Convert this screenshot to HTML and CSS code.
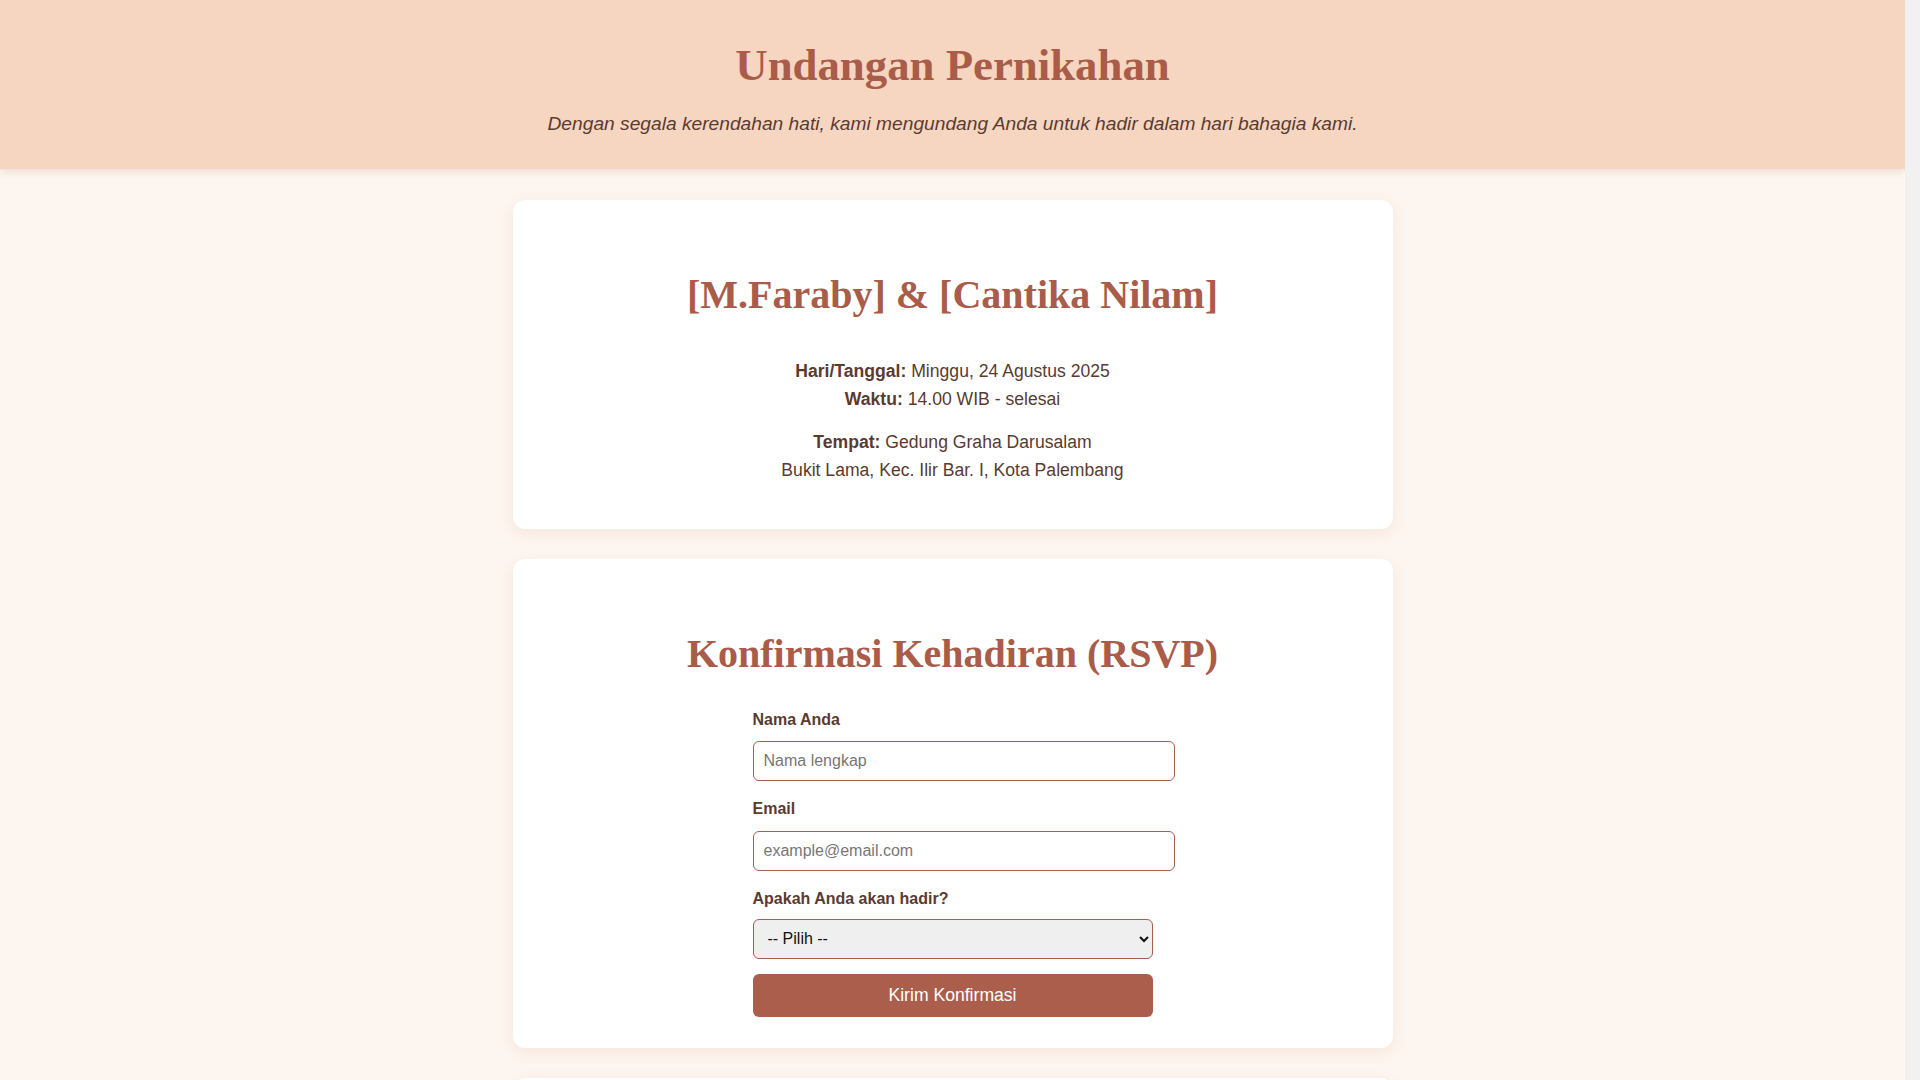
FILE: index.html
```html
<!DOCTYPE html>
<html lang="id">
<head>
<meta charset="utf-8">
<title>Undangan Pernikahan</title>
<link rel="stylesheet" href="styles.css">
</head>
<body>
<header class="hero">
  <h1 class="hero-title">Undangan Pernikahan</h1>
  <p class="hero-sub">Dengan segala kerendahan hati, kami mengundang Anda untuk hadir dalam hari bahagia kami.</p>
</header>
<main class="main">
  <section class="card">
    <h2 class="card-title">[M.Faraby] &amp; [Cantika Nilam]</h2>
    <p class="info info-first"><strong>Hari/Tanggal:</strong> Minggu, 24 Agustus 2025<br><strong>Waktu:</strong> 14.00 WIB - selesai</p>
    <p class="info"><strong>Tempat:</strong> Gedung Graha Darusalam<br>Bukit Lama, Kec. Ilir Bar. I, Kota Palembang</p>
  </section>
  <section class="card card-form">
    <h2 class="card-title">Konfirmasi Kehadiran (RSVP)</h2>
    <form class="form">
      <label class="label" for="nama">Nama Anda</label>
      <input class="field" id="nama" type="text" placeholder="Nama lengkap">
      <label class="label" for="email">Email</label>
      <input class="field" id="email" type="email" placeholder="example@email.com">
      <label class="label label-select" for="hadir">Apakah Anda akan hadir?</label>
      <select class="select" id="hadir">
        <option>-- Pilih --</option>
        <option>Ya, saya akan hadir</option>
        <option>Maaf, tidak bisa hadir</option>
      </select>
      <button class="btn" type="button">Kirim Konfirmasi</button>
    </form>
  </section>
  <section class="card">
    <h2 class="card-title">Ucapan &amp; Doa</h2>
    <p class="info">Terima kasih atas doa dan restu Anda.</p>
  </section>
</main>
</body>
</html>
```
FILE: styles.css
```css
html {
  margin: 0;
  padding: 0;
  background: #f1f1f1;
}
body {
  margin: 0 15px 0 0;
  padding: 0;
  min-height: 100vh;
  background: #fdf5ef;
  font-family: "Liberation Sans", Arial, sans-serif;
  color: #5a3b30;
}
.hero {
  background: #f6d5c1;
  text-align: center;
  padding: 38px 20px 34px;
  box-shadow: 0 2px 8px rgba(120, 70, 50, 0.15);
}
.hero-title {
  margin: 0;
  font-family: "Liberation Serif", "Times New Roman", serif;
  font-weight: bold;
  font-size: 44.8px;
  line-height: 55px;
  color: #a95c49;
}
.hero-sub {
  margin: 20px 0 0;
  font-style: italic;
  font-size: 19.2px;
  line-height: 22px;
  color: #5a3b30;
}
.main {
  padding: 31px 20px 30px;
}
.card {
  max-width: 820px;
  margin: 0 auto 30px;
  padding: 30px;
  background: #ffffff;
  border-radius: 12px;
  box-shadow: 0 4px 14px rgba(200, 130, 100, 0.12);
  text-align: center;
}
.card-form {
  padding-bottom: 31.5px;
}
.card-title {
  margin: 42px 0 32px;
  font-family: "Liberation Serif", "Times New Roman", serif;
  font-weight: bold;
  font-size: 40px;
  line-height: 46px;
  color: #a95c49;
}
.info {
  margin: 15px 0;
  font-size: 17.6px;
  line-height: 28px;
  color: #5a3b30;
}
.info-first {
  margin-top: 39px;
}
.info strong {
  font-weight: bold;
}
.form {
  max-width: 400px;
  margin: 0 auto;
  padding-top: 1.5px;
  text-align: left;
}
.label {
  display: block;
  font-weight: bold;
  font-size: 16px;
  line-height: 18px;
  margin-bottom: 12.5px;
  color: #5a3b30;
}
.label-select {
  margin-bottom: 11px;
}
.field {
  display: block;
  width: 100%;
  box-sizing: content-box;
  padding: 10px;
  margin: 0 0 19px;
  border: 1px solid #a95c49;
  border-radius: 6px;
  font-family: "Liberation Sans", Arial, sans-serif;
  font-size: 16px;
  line-height: 18px;
  color: #333;
  background: #fff;
}
.field::placeholder {
  color: #777;
}
.select {
  display: block;
  width: 100%;
  height: 40px;
  padding: 0 10px;
  margin: 0 0 15px;
  border: 1px solid #a95c49;
  border-radius: 6px;
  background-color: #efefef;
  font-family: "Liberation Sans", Arial, sans-serif;
  font-size: 16px;
  color: #111;
}
.btn {
  display: block;
  width: 100%;
  padding: 11px;
  border: none;
  border-radius: 6px;
  background: #ab5e4c;
  color: #fff;
  font-family: "Liberation Sans", Arial, sans-serif;
  font-size: 17.6px;
  line-height: 21px;
  cursor: pointer;
}
```
